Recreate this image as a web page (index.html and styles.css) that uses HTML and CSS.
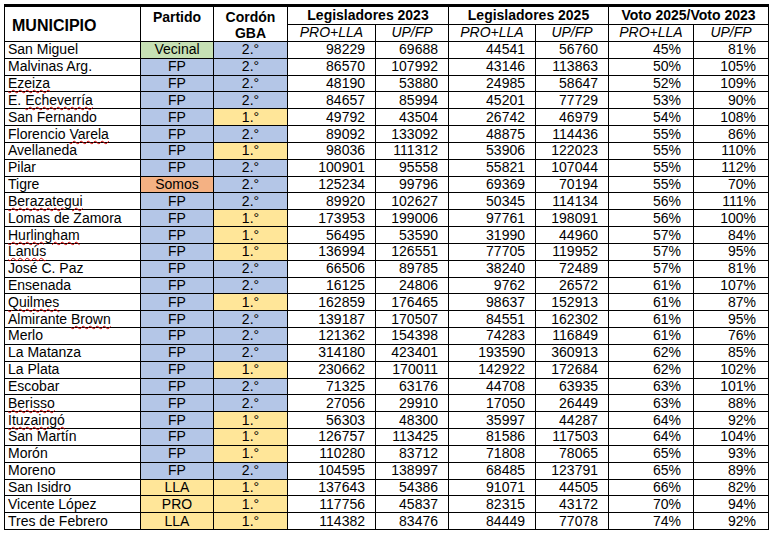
FILE: index.html
```html
<!DOCTYPE html>
<html lang="es">
<head>
<meta charset="utf-8">
<title>Municipios</title>
<link rel="stylesheet" href="styles.css">
</head>
<body>
<div class="wrap">
<table class="sheet">
<colgroup>
<col class="c-mun"><col class="c-par"><col class="c-cor"><col class="c-a"><col class="c-b"><col class="c-c"><col class="c-d"><col class="c-e"><col class="c-f">
</colgroup>
<thead>
<tr class="h1">
<th rowspan="2" class="mun-h">MUNICIPIO</th>
<th rowspan="2" class="top-h">Partido</th>
<th rowspan="2" class="top-h">Cordón<br>GBA</th>
<th colspan="2">Legisladores 2023</th>
<th colspan="2">Legisladores 2025</th>
<th colspan="2">Voto 2025/Voto 2023</th>
</tr>
<tr class="h2">
<th class="sub">PRO+LLA</th><th class="sub">UP/FP</th>
<th class="sub">PRO+LLA</th><th class="sub">UP/FP</th>
<th class="sub">PRO+LLA</th><th class="sub">UP/FP</th>
</tr>
</thead>
<tbody>
<tr><td class="name">San Miguel</td><td class="p vec">Vecinal</td><td class="g g2">2.°</td><td class="n">98229</td><td class="n">69688</td><td class="n">44541</td><td class="n">56760</td><td class="pc">45%</td><td class="pc">81%</td></tr>
<tr><td class="name">Malvinas Arg.</td><td class="p fp">FP</td><td class="g g2">2.°</td><td class="n">86570</td><td class="n">107992</td><td class="n">43146</td><td class="n">113863</td><td class="pc">50%</td><td class="pc">105%</td></tr>
<tr><td class="name"><span class="sp">Ezeiza</span></td><td class="p fp">FP</td><td class="g g2">2.°</td><td class="n">48190</td><td class="n">53880</td><td class="n">24985</td><td class="n">58647</td><td class="pc">52%</td><td class="pc">109%</td></tr>
<tr><td class="name">E. <span class="sp">Echeverría</span></td><td class="p fp">FP</td><td class="g g2">2.°</td><td class="n">84657</td><td class="n">85994</td><td class="n">45201</td><td class="n">77729</td><td class="pc">53%</td><td class="pc">90%</td></tr>
<tr><td class="name">San Fernando</td><td class="p fp">FP</td><td class="g g1">1.°</td><td class="n">49792</td><td class="n">43504</td><td class="n">26742</td><td class="n">46979</td><td class="pc">54%</td><td class="pc">108%</td></tr>
<tr><td class="name">Florencio <span class="sp">Varela</span></td><td class="p fp">FP</td><td class="g g2">2.°</td><td class="n">89092</td><td class="n">133092</td><td class="n">48875</td><td class="n">114436</td><td class="pc">55%</td><td class="pc">86%</td></tr>
<tr><td class="name">Avellaneda</td><td class="p fp">FP</td><td class="g g1">1.°</td><td class="n">98036</td><td class="n">111312</td><td class="n">53906</td><td class="n">122023</td><td class="pc">55%</td><td class="pc">110%</td></tr>
<tr><td class="name">Pilar</td><td class="p fp">FP</td><td class="g g2">2.°</td><td class="n">100901</td><td class="n">95558</td><td class="n">55821</td><td class="n">107044</td><td class="pc">55%</td><td class="pc">112%</td></tr>
<tr><td class="name">Tigre</td><td class="p somos">Somos</td><td class="g g2">2.°</td><td class="n">125234</td><td class="n">99796</td><td class="n">69369</td><td class="n">70194</td><td class="pc">55%</td><td class="pc">70%</td></tr>
<tr><td class="name"><span class="sp">Berazategui</span></td><td class="p fp">FP</td><td class="g g2">2.°</td><td class="n">89920</td><td class="n">102627</td><td class="n">50345</td><td class="n">114134</td><td class="pc">56%</td><td class="pc">111%</td></tr>
<tr><td class="name">Lomas de Zamora</td><td class="p fp">FP</td><td class="g g1">1.°</td><td class="n">173953</td><td class="n">199006</td><td class="n">97761</td><td class="n">198091</td><td class="pc">56%</td><td class="pc">100%</td></tr>
<tr><td class="name"><span class="sp">Hurlingham</span></td><td class="p fp">FP</td><td class="g g1">1.°</td><td class="n">56495</td><td class="n">53590</td><td class="n">31990</td><td class="n">44960</td><td class="pc">57%</td><td class="pc">84%</td></tr>
<tr><td class="name"><span class="sp">Lanús</span></td><td class="p fp">FP</td><td class="g g1">1.°</td><td class="n">136994</td><td class="n">126551</td><td class="n">77705</td><td class="n">119952</td><td class="pc">57%</td><td class="pc">95%</td></tr>
<tr><td class="name">José C. Paz</td><td class="p fp">FP</td><td class="g g2">2.°</td><td class="n">66506</td><td class="n">89785</td><td class="n">38240</td><td class="n">72489</td><td class="pc">57%</td><td class="pc">81%</td></tr>
<tr><td class="name">Ensenada</td><td class="p fp">FP</td><td class="g g2">2.°</td><td class="n">16125</td><td class="n">24806</td><td class="n">9762</td><td class="n">26572</td><td class="pc">61%</td><td class="pc">107%</td></tr>
<tr><td class="name"><span class="sp">Quilmes</span></td><td class="p fp">FP</td><td class="g g1">1.°</td><td class="n">162859</td><td class="n">176465</td><td class="n">98637</td><td class="n">152913</td><td class="pc">61%</td><td class="pc">87%</td></tr>
<tr><td class="name">Almirante <span class="sp">Brown</span></td><td class="p fp">FP</td><td class="g g2">2.°</td><td class="n">139187</td><td class="n">170507</td><td class="n">84551</td><td class="n">162302</td><td class="pc">61%</td><td class="pc">95%</td></tr>
<tr><td class="name">Merlo</td><td class="p fp">FP</td><td class="g g2">2.°</td><td class="n">121362</td><td class="n">154398</td><td class="n">74283</td><td class="n">116849</td><td class="pc">61%</td><td class="pc">76%</td></tr>
<tr><td class="name">La Matanza</td><td class="p fp">FP</td><td class="g g2">2.°</td><td class="n">314180</td><td class="n">423401</td><td class="n">193590</td><td class="n">360913</td><td class="pc">62%</td><td class="pc">85%</td></tr>
<tr><td class="name">La Plata</td><td class="p fp">FP</td><td class="g g1">1.°</td><td class="n">230662</td><td class="n">170011</td><td class="n">142922</td><td class="n">172684</td><td class="pc">62%</td><td class="pc">102%</td></tr>
<tr><td class="name">Escobar</td><td class="p fp">FP</td><td class="g g2">2.°</td><td class="n">71325</td><td class="n">63176</td><td class="n">44708</td><td class="n">63935</td><td class="pc">63%</td><td class="pc">101%</td></tr>
<tr><td class="name"><span class="sp">Berisso</span></td><td class="p fp">FP</td><td class="g g2">2.°</td><td class="n">27056</td><td class="n">29910</td><td class="n">17050</td><td class="n">26449</td><td class="pc">63%</td><td class="pc">88%</td></tr>
<tr><td class="name"><span class="sp">Ituzaingó</span></td><td class="p fp">FP</td><td class="g g1">1.°</td><td class="n">56303</td><td class="n">48300</td><td class="n">35997</td><td class="n">44287</td><td class="pc">64%</td><td class="pc">92%</td></tr>
<tr><td class="name">San Martín</td><td class="p fp">FP</td><td class="g g1">1.°</td><td class="n">126757</td><td class="n">113425</td><td class="n">81586</td><td class="n">117503</td><td class="pc">64%</td><td class="pc">104%</td></tr>
<tr><td class="name">Morón</td><td class="p fp">FP</td><td class="g g1">1.°</td><td class="n">110280</td><td class="n">83712</td><td class="n">71808</td><td class="n">78065</td><td class="pc">65%</td><td class="pc">93%</td></tr>
<tr><td class="name">Moreno</td><td class="p fp">FP</td><td class="g g2">2.°</td><td class="n">104595</td><td class="n">138997</td><td class="n">68485</td><td class="n">123791</td><td class="pc">65%</td><td class="pc">89%</td></tr>
<tr><td class="name">San Isidro</td><td class="p lla">LLA</td><td class="g g1">1.°</td><td class="n">137643</td><td class="n">54386</td><td class="n">91071</td><td class="n">44505</td><td class="pc">66%</td><td class="pc">82%</td></tr>
<tr><td class="name">Vicente López</td><td class="p lla">PRO</td><td class="g g1">1.°</td><td class="n">117756</td><td class="n">45837</td><td class="n">82315</td><td class="n">43172</td><td class="pc">70%</td><td class="pc">94%</td></tr>
<tr><td class="name">Tres de Febrero</td><td class="p lla">LLA</td><td class="g g1">1.°</td><td class="n">114382</td><td class="n">83476</td><td class="n">84449</td><td class="n">77078</td><td class="pc">74%</td><td class="pc">92%</td></tr>
</tbody>
</table>
</div>
</body>
</html>
```
FILE: styles.css
```css
html, body {
  margin: 0;
  padding: 0;
  background: #fff;
}
.wrap {
  padding: 4px 0 0 4px;
}
.sheet {
  border-collapse: collapse;
  table-layout: fixed;
  width: 765px;
  font-family: "Liberation Sans", Arial, sans-serif;
  font-size: 14px;
  color: #000;
  border-top: 3px solid #000;
}
.c-mun { width: 136px; }
.c-par { width: 73px; }
.c-cor { width: 74px; }
.c-a { width: 88px; }
.c-b { width: 73px; }
.c-c { width: 87px; }
.c-d { width: 73px; }
.c-e { width: 85px; }
.c-f { width: 75px; }

.sheet th,
.sheet td {
  border: 1px solid #000;
  padding: 0;
  line-height: 15px;
  white-space: nowrap;
}
.sheet th {
  font-weight: bold;
  text-align: center;
  vertical-align: middle;
}
.sheet .h1 th,
.sheet .h2 th {
  height: 16px;
}
.sheet th.mun-h {
  text-align: left;
  padding-left: 7px;
  font-size: 16px;
  padding-top: 2px;
}
.sheet th.top-h {
  vertical-align: top;
  line-height: 16px;
  padding-top: 2px;
}
.sheet th.sub {
  font-weight: normal;
  font-style: italic;
}
.sheet tbody td {
  height: 15.83px;
}
.sheet td.name {
  text-align: left;
  padding-left: 3px;
}
.sheet td.p,
.sheet td.g {
  text-align: center;
}
.sheet td.n {
  text-align: right;
  padding-right: 10px;
}
.sheet td.pc {
  text-align: right;
  padding-right: 12px;
}
.vec { background: #c6e0b4; }
.fp { background: #b4c6e7; }
.somos { background: #f4b183; }
.lla { background: #ffe699; }
.g2 { background: #b4c6e7; }
.g1 { background: #ffe699; }
.sp {
  text-decoration-line: underline;
  text-decoration-style: wavy;
  text-decoration-color: #d00000;
  text-decoration-thickness: 1px;
  text-underline-offset: 1px;
}
```
